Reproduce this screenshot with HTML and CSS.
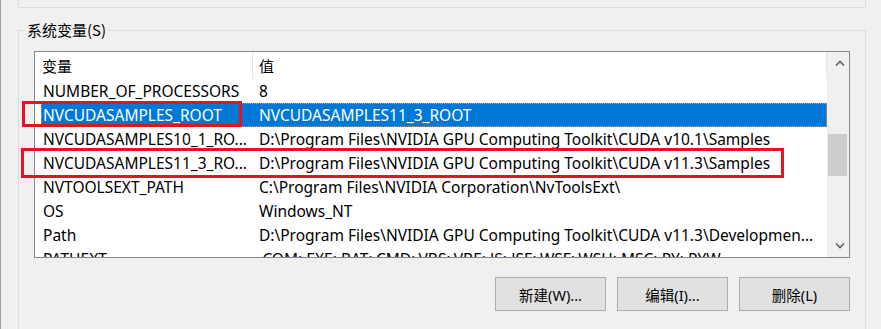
FILE: index.html
```html
<!DOCTYPE html>
<html lang="zh-CN">
<head>
    <meta charset="UTF-8">
    <title>系统变量</title>
    <link rel="stylesheet" href="styles.css">
</head>
<body>
    <div class="window">
        <div class="group-top"></div>

        <fieldset class="group">
            <legend>系统变量(S)</legend>

            <div class="listbox">
                <div class="list">
                    <div class="list-head">
                        <div class="head-name">变量</div>
                        <div class="head-value">值</div>
                    </div>
                    <div class="row">
                        <div class="cell-name">NUMBER_OF_PROCESSORS</div>
                        <div class="cell-value">8</div>
                    </div>
                    <div class="row selected">
                        <div class="cell-name">NVCUDASAMPLES_ROOT</div>
                        <div class="cell-value">NVCUDASAMPLES11_3_ROOT</div>
                    </div>
                    <div class="row">
                        <div class="cell-name">NVCUDASAMPLES10_1_RO...</div>
                        <div class="cell-value">D:\Program Files\NVIDIA GPU Computing Toolkit\CUDA v10.1\Samples</div>
                    </div>
                    <div class="row">
                        <div class="cell-name">NVCUDASAMPLES11_3_RO...</div>
                        <div class="cell-value">D:\Program Files\NVIDIA GPU Computing Toolkit\CUDA v11.3\Samples</div>
                    </div>
                    <div class="row">
                        <div class="cell-name">NVTOOLSEXT_PATH</div>
                        <div class="cell-value">C:\Program Files\NVIDIA Corporation\NvToolsExt\</div>
                    </div>
                    <div class="row">
                        <div class="cell-name">OS</div>
                        <div class="cell-value">Windows_NT</div>
                    </div>
                    <div class="row">
                        <div class="cell-name">Path</div>
                        <div class="cell-value">D:\Program Files\NVIDIA GPU Computing Toolkit\CUDA v11.3\Developmen...</div>
                    </div>
                    <div class="row">
                        <div class="cell-name">PATHEXT</div>
                        <div class="cell-value">.COM;.EXE;.BAT;.CMD;.VBS;.VBE;.JS;.JSE;.WSF;.WSH;.MSC;.PY;.PYW</div>
                    </div>
                </div>

                <div class="scrollbar">
                    <div class="scroll-btn">
                        <svg width="10" height="6" viewBox="0 0 10 6"><path d="M1 5.5 L5 1.5 L9 5.5" fill="none" stroke="#606060" stroke-width="1.6"/></svg>
                    </div>
                    <div class="scroll-track">
                        <div class="scroll-thumb" style="margin-top: 60px"></div>
                    </div>
                    <div class="scroll-btn">
                        <svg width="10" height="6" viewBox="0 0 10 6"><path d="M1 0.5 L5 4.5 L9 0.5" fill="none" stroke="#606060" stroke-width="1.6"/></svg>
                    </div>
                </div>
            </div>

            <div class="buttons">
                <button>新建(W)...</button>
                <button>编辑(I)...</button>
                <button>删除(L)</button>
            </div>
        </fieldset>

        <!-- red highlight boxes drawn over the list -->
        <div class="mark mark-1"></div>
        <div class="mark mark-2"></div>
    </div>
</body>
</html>
```

FILE: styles.css
```css
body {
    margin: 0;
    background: #f0f0f0;
    font-family: "Noto Sans", "Noto Sans CJK SC", sans-serif;
    font-size: 15.5px;
    color: #000;
}

.window {
    position: relative;
    height: 329px;
    overflow: hidden;
    border-left: 1px solid #a0a0a0;
}

.group-top {
    height: 7px;
    margin: 0 15px 0 17px;
    border: 1px solid #dcdcdc;
    border-top: none;
}

.group {
    margin: 12px 15px 0 17px;
    padding: 11px 15px 40px 15px;
    border: 1px solid #dcdcdc;
    min-width: 0;
}

.group legend {
    margin-left: -9px;
    padding: 0 2px;
    font-family: "Noto Sans CJK SC", sans-serif;
    font-size: 15px;
    line-height: 20px;
    color: #000;
}

/* List view */
.listbox {
    display: flex;
    height: 207px;
    box-sizing: border-box;
    border: 1px solid #828790;
    background: #fff;
    overflow: hidden;
}

.list {
    width: 792px;
    overflow: hidden;
}

.list-head {
    display: flex;
    height: 27px;
    align-items: center;
    border-right: 1px solid #e5e5e5;
    font-family: "Noto Sans CJK SC", sans-serif;
    font-size: 15px;
}

.head-name {
    width: 210px;
    height: 27px;
    line-height: 27px;
    padding-left: 7px;
    border-right: 1px solid #e5e5e5;
}

.head-value {
    padding-left: 6px;
}

.row {
    display: flex;
    height: 24px;
    line-height: 24px;
    margin-left: 6px;
    white-space: nowrap;
}

.cell-name {
    width: 209px;
    padding-left: 2px;
    overflow: hidden;
}

.cell-value {
    flex: 1;
    padding-left: 7px;
    overflow: hidden;
}

.row.selected {
    background: #0078d7;
    color: #fff;
    outline: 1px dotted #f0902c;
    outline-offset: -1px;
}

/* Scrollbar */
.scrollbar {
    width: 22px;
    display: flex;
    flex-direction: column;
    background: #f0f0f0;
}

.scroll-btn {
    height: 22px;
    display: flex;
    align-items: center;
    justify-content: center;
}

.scroll-btn svg {
    display: block;
    margin-left: 3px;
}

.scroll-track {
    flex: 1;
}

.scroll-thumb {
    width: 19px;
    height: 42px;
    margin-left: 1px;
    background: #cdcdcd;
}

/* Buttons */
.buttons {
    display: flex;
    justify-content: flex-end;
    gap: 11px;
    margin-top: 19px;
}

button {
    width: 111px;
    height: 34px;
    border: 1px solid #adadad;
    background: #e1e1e1;
    font-family: "Noto Sans", "Noto Sans CJK SC", sans-serif;
    font-size: 14.5px;
    color: #000;
    padding: 0;
}

/* Annotations */
.mark {
    position: absolute;
    border: 3px solid #e81123;
    box-sizing: border-box;
}

.mark-1 {
    left: 21px;
    top: 101px;
    width: 220px;
    height: 26px;
}

.mark-2 {
    left: 20px;
    top: 148px;
    width: 763px;
    height: 30px;
}
```
